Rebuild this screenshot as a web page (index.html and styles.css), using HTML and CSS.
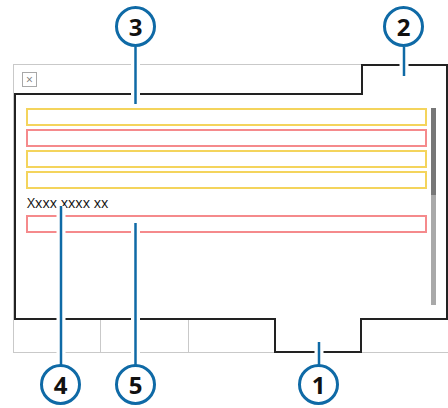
FILE: index.html
```html
<!DOCTYPE html>
<html lang="en">
<head>
  <meta charset="UTF-8">
  <title>Panel callouts</title>
  <link rel="stylesheet" href="styles.css">
</head>
<body>
<div class="stage">
  <div class="window">
    <div class="tabbar">
      <span class="close">&times;</span>
    </div>
    <div class="content">
      <div class="fields">
        <div class="field warn"></div>
        <div class="field error"></div>
        <div class="field warn"></div>
        <div class="field warn"></div>
        <div class="label">Xxxx xxxx xx</div>
        <div class="field error"></div>
      </div>
      <div class="scrollbar"><div class="thumb"></div></div>
    </div>
    <div class="footer">
      <div class="cell"></div>
      <div class="cell"></div>
      <div class="cell last"></div>
    </div>
  </div>

  <svg class="overlay" width="448" height="408" viewBox="0 0 448 408">
    <path class="outline" d="M15 94 H362 V65 H447 V319 H361 V352 H275 V319 H15 Z"/>
    <g class="halo">
      <line x1="135.5" y1="47" x2="135.5" y2="104"/>
      <line x1="404" y1="47" x2="404" y2="76"/>
      <line x1="319" y1="342" x2="319" y2="365"/>
      <line x1="61" y1="206" x2="61" y2="365"/>
      <line x1="135.5" y1="223" x2="135.5" y2="365"/>
    </g>
    <g class="leader">
      <line x1="135.5" y1="47" x2="135.5" y2="104"/>
      <line x1="404" y1="47" x2="404" y2="76"/>
      <line x1="319" y1="342" x2="319" y2="365"/>
      <line x1="61" y1="206" x2="61" y2="365"/>
      <line x1="135.5" y1="223" x2="135.5" y2="365"/>
    </g>
  </svg>

  <div class="callout c3">3</div>
  <div class="callout c2">2</div>
  <div class="callout c1">1</div>
  <div class="callout c4">4</div>
  <div class="callout c5">5</div>
</div>
</body>
</html>
```

FILE: styles.css
```css
html, body {
  margin: 0;
  padding: 0;
  background: #fff;
  font-family: 'Open Sans', 'Noto Sans', sans-serif;
}
.stage {
  position: relative;
  width: 448px;
  height: 408px;
  overflow: hidden;
}
.window {
  margin: 64px 0 0 13px;
  width: 434px;
  border-top: 1px solid #c9c9c9;
  border-left: 1px solid #c9c9c9;
}
.tabbar {
  height: 28px;
  padding: 7px 0 0 8px;
  box-sizing: border-box;
}
.close {
  display: flex;
  align-items: center;
  justify-content: center;
  width: 15px;
  height: 15px;
  box-sizing: border-box;
  border: 1px solid #a8a8a8;
  color: #777;
  font-size: 12px;
  line-height: 1;
}
.content {
  display: flex;
  height: 226px;
  padding: 15px 0 0 12px;
  box-sizing: border-box;
}
.fields {
  width: 401px;
  display: flex;
  flex-direction: column;
  gap: 3px;
}
.field {
  height: 18px;
  box-sizing: border-box;
  border: 2px solid;
}
.field.warn {
  border-color: #f4d45c;
}
.field.error {
  border-color: #f58a8c;
}
.label {
  height: 19px;
  margin-top: 1px;
  font-size: 14px;
  line-height: 19px;
  color: #111;
  padding-left: 1px;
}
.scrollbar {
  width: 5px;
  height: 197px;
  margin-left: 4px;
  background: #a9a9a9;
}
.thumb {
  height: 87px;
  background: #777;
}
.footer {
  display: flex;
  height: 33px;
  border-bottom: 1px solid #c9c9c9;
}
.cell {
  width: 86px;
  border-right: 1px solid #c9c9c9;
}
.cell + .cell {
  width: 87px;
}
.cell.last {
  flex: 1;
  border-right: none;
}
.overlay {
  position: absolute;
  left: 0;
  top: 0;
}
.outline {
  fill: none;
  stroke: #222;
  stroke-width: 2;
}
.halo line {
  stroke: #fff;
  stroke-width: 9;
}
.leader line {
  stroke: #0f6aa6;
  stroke-width: 2.5;
}
.callout {
  position: absolute;
  width: 41px;
  height: 41px;
  box-sizing: border-box;
  border: 3px solid #0f6aa6;
  border-radius: 50%;
  background: #fff;
  display: flex;
  align-items: center;
  justify-content: center;
  font-size: 24px;
  font-weight: 700;
  color: #111;
  line-height: 1;
}
.c3 { left: 115px; top: 6px; }
.c2 { left: 383px; top: 6px; }
.c1 { left: 298px; top: 364px; }
.c4 { left: 40px; top: 364px; }
.c5 { left: 115px; top: 364px; }
```
